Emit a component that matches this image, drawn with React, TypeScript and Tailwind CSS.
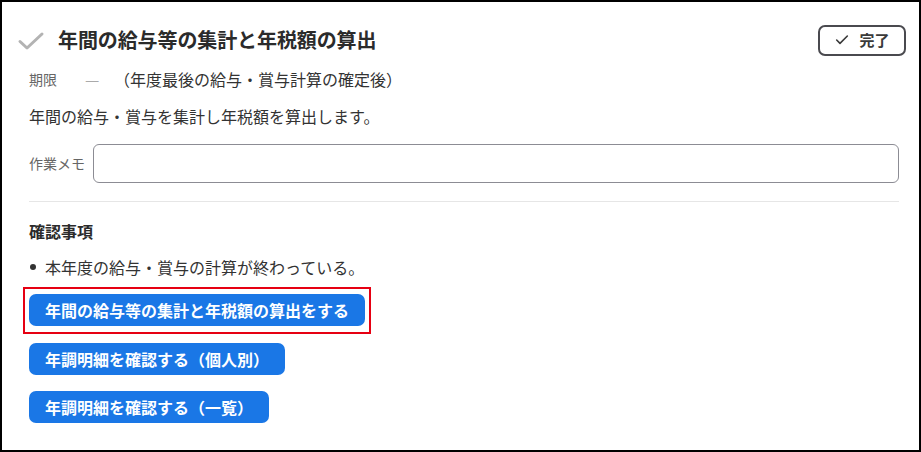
import { Check } from "lucide-react";

const font = "font-['Noto_Sans_CJK_JP','Noto_Sans',sans-serif]";

const actions = [
  { label: "年間の給与等の集計と年税額の算出をする", highlighted: true },
  { label: "年調明細を確認する（個人別）", highlighted: false },
  { label: "年調明細を確認する（一覧）", highlighted: false },
];

export default function App() {
  return (
    <div className={`${font} box-border h-[452px] w-[921px] overflow-hidden border-2 border-black bg-white text-[#333]`}>
      {/* Header */}
      <div className="flex items-center justify-between pl-[14px] pr-[13px] pt-5">
        <div className="flex items-center gap-[12px]">
          <svg width="30" height="20" viewBox="0 0 30 20" fill="none" className="mt-[1px]">
            <path d="M4 10.5 L11 17 L26 3" stroke="#b3b3b3" strokeWidth="3" strokeLinecap="round" strokeLinejoin="round" />
          </svg>
          <h1 className="text-[20px] font-bold leading-[36px] tracking-[-0.1px] text-[#2b2b2b]">
            年間の給与等の集計と年税額の算出
          </h1>
        </div>
        <button
          type="button"
          className="flex h-[31px] w-[88px] items-center justify-center gap-[9px] rounded-[7px] border-2 border-[#4a4a4f] bg-white text-[15px] font-bold text-[#3a3a3a]"
        >
          <Check className="h-4 w-4" strokeWidth={2.4} />
          <span>完了</span>
        </button>
      </div>

      {/* Due */}
      <div className="mt-[9px] flex items-center pl-[27px] text-[16px] leading-6">
        <span className="w-[56px] text-[14px] text-[#666]">期限</span>
        <span className="w-[29px] text-[#aaa]">—</span>
        <span className="text-[#333]">（年度最後の給与・賞与計算の確定後）</span>
      </div>

      <p className="mt-[13px] pl-[27px] text-[16px] leading-6 text-[#333]">
        年間の給与・賞与を集計し年税額を算出します。
      </p>

      {/* Memo */}
      <div className="mt-[16px] flex items-center pl-[27px] pr-[20px]">
        <span className="w-[64px] text-[14px] text-[#666]">作業メモ</span>
        <input
          type="text"
          className="h-[39px] flex-1 rounded-[6px] border border-[#8c8c94] bg-white px-3 outline-none"
        />
      </div>

      <div className="mx-[27px] mt-[18px] mr-[20px] h-px bg-[#e6e6e6]" />

      {/* Checklist */}
      <div className="mt-[17px] pl-[27px]">
        <h2 className="text-[16px] font-bold leading-6 text-[#2b2b2b]">確認事項</h2>
        <ul className="mt-[12px] pl-[1px] text-[16px] leading-6">
          <li className="flex items-center gap-[9px]">
            <span className="h-[6px] w-[6px] rounded-full bg-[#333]" />
            本年度の給与・賞与の計算が終わっている。
          </li>
        </ul>

        <div className="mt-[15px] flex flex-col items-start gap-[16px]">
          {actions.map((a) =>
            a.highlighted ? (
              <div key={a.label} className="-ml-[6px] -my-[7px] border-2 border-[#e60012] px-[4px] pt-[5px] pb-[6px]">
                <ActionButton label={a.label} />
              </div>
            ) : (
              <ActionButton key={a.label} label={a.label} />
            )
          )}
        </div>
      </div>
    </div>
  );
}

function ActionButton({ label }: { label: string }) {
  return (
    <button
      type="button"
      className="flex h-[32px] items-center rounded-[7px] bg-[#1a77e6] px-[16px] text-[16px] font-bold text-white"
    >
      {label}
    </button>
  );
}
